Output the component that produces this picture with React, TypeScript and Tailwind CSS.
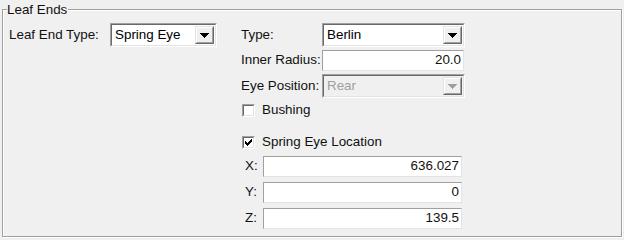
const font = { fontFamily: '"Liberation Sans", Arial, sans-serif' };

const DropButton = ({ disabled }: { disabled?: boolean }) => (
  <div className="flex h-full w-[19px] border border-t-[#e3e3e3] border-l-[#e3e3e3] border-r-[#696969] border-b-[#696969]">
    <div className="flex flex-1 items-center justify-center border border-t-white border-l-white border-r-[#a0a0a0] border-b-[#a0a0a0] bg-[#f0f0f0]">
      <svg width="9" height="5" viewBox="0 0 9 5" shapeRendering="crispEdges">
        <path d="M0 0H9L4.5 5Z" fill={disabled ? "#a0a0a0" : "#000"} />
      </svg>
    </div>
  </div>
);

interface ComboProps {
  value: string;
  className: string;
  disabled?: boolean;
}

const Combo = ({ value, className, disabled }: ComboProps) => (
  <div
    className={`flex border border-t-[#a0a0a0] border-l-[#a0a0a0] border-r-white border-b-white ${className}`}
  >
    <div
      className={`flex flex-1 items-center border border-t-[#696969] border-l-[#696969] border-r-[#e3e3e3] border-b-[#e3e3e3] p-px ${
        disabled ? "bg-[#f0f0f0] text-[#a0a0a0]" : "bg-white text-black"
      }`}
    >
      <span className="flex-1 pl-[2px] leading-none">{value}</span>
      <DropButton disabled={disabled} />
    </div>
  </div>
);

const Field = ({ value, className }: { value: string; className: string }) => (
  <div
    className={`flex items-center justify-end border border-t-[#a0a0a0] border-l-[#a0a0a0] border-r-[#e3e3e3] border-b-[#e3e3e3] bg-white pr-[2px] ${className}`}
  >
    {value}
  </div>
);

const CheckBox = ({ checked, label }: { checked?: boolean; label: string }) => (
  <div className="flex items-center gap-[7px] pl-[1px]">
    <div className="flex h-[13px] w-[13px] border border-t-[#a0a0a0] border-l-[#a0a0a0] border-r-white border-b-white">
      <div className="flex flex-1 items-center justify-center border border-t-[#696969] border-l-[#696969] border-r-[#e3e3e3] border-b-[#e3e3e3] bg-white">
        {checked && (
          <svg width="7" height="7" viewBox="0 0 7 7" shapeRendering="crispEdges">
            <path
              d="M6 0h1v3h-1v1h-1v1h-1v1h-1v1h-1v-1h-1v-1h-1v-3h1v1h1v1h1v-1h1v-1h1z"
              fill="#000"
            />
          </svg>
        )}
      </div>
    </div>
    <span>{label}</span>
  </div>
);

export default function App() {
  return (
    <div
      className="h-[240px] w-[624px] bg-[#f0f0f0] pl-[2px] pt-[9px] text-[13.4px] text-[#111]"
      style={font}
    >
      <div className="relative h-[228px] w-[620px] border border-[#a0a0a0] shadow-[inset_1px_1px_0_#fff,1px_1px_0_#fff]">
        <span className="absolute left-[4px] top-[-8px] bg-[#f0f0f0] pr-[1px] leading-[15px]">
          Leaf Ends
        </span>
        <div className="flex pl-[6px] pt-[13px]">
          <div className="flex h-[24px] w-[232px] items-center">
            <span className="w-[101px]">Leaf End Type:</span>
            <Combo value="Spring Eye" className="h-[24px] w-[107px]" />
          </div>
          <div className="flex flex-col">
            <div className="flex h-[24px] items-center">
              <span className="w-[81px]">Type:</span>
              <Combo value="Berlin" className="h-[24px] w-[143px]" />
            </div>
            <div className="mt-[3px] flex h-[21px] items-center">
              <span className="w-[81px]">Inner Radius:</span>
              <Field value="20.0" className="h-[21px] w-[142px]" />
            </div>
            <div className="mt-[3px] flex h-[24px] items-center">
              <span className="w-[81px]">Eye Position:</span>
              <Combo value="Rear" className="h-[24px] w-[143px]" disabled />
            </div>
            <div className="mt-[6px] flex h-[13px] items-center">
              <CheckBox label="Bushing" />
            </div>
            <div className="mt-[19px] flex h-[13px] items-center">
              <CheckBox checked label="Spring Eye Location" />
            </div>
            <div className="mt-[7px] flex flex-col gap-[5px] pl-[4px]">
              {[
                ["X:", "636.027"],
                ["Y:", "0"],
                ["Z:", "139.5"],
              ].map(([k, v]) => (
                <div key={k} className="flex h-[21px] items-center">
                  <span className="w-[18px]">{k}</span>
                  <Field value={v} className="h-[21px] w-[199px]" />
                </div>
              ))}
            </div>
          </div>
        </div>
      </div>
    </div>
  );
}
